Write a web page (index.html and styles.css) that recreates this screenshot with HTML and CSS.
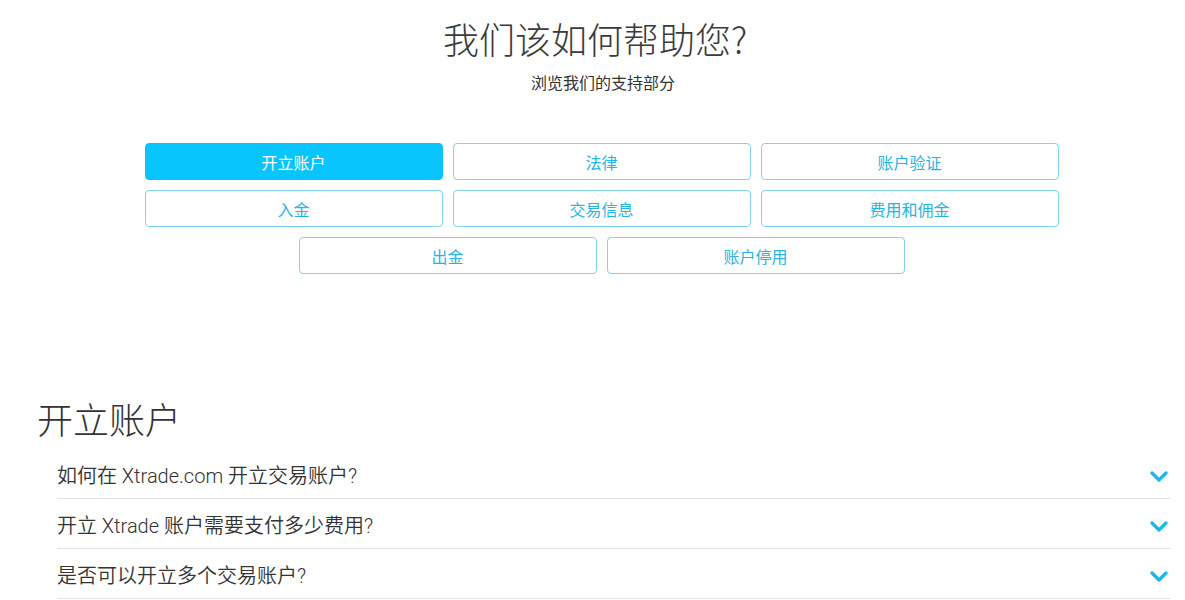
FILE: index.html
```html
<!DOCTYPE html>
<html lang="zh">
<head>
<meta charset="utf-8">
<title>帮助</title>
<link rel="stylesheet" href="styles.css">
</head>
<body>
<header class="hero">
  <h1 class="hero-title">我们该如何帮助您?</h1>
  <p class="hero-sub">浏览我们的支持部分</p>
</header>
<nav class="tabs">
  <div class="tab-row">
    <a class="tab active">开立账户</a>
    <a class="tab">法律</a>
    <a class="tab">账户验证</a>
  </div>
  <div class="tab-row">
    <a class="tab">入金</a>
    <a class="tab">交易信息</a>
    <a class="tab">费用和佣金</a>
  </div>
  <div class="tab-row">
    <a class="tab">出金</a>
    <a class="tab">账户停用</a>
  </div>
</nav>
<section class="faq">
  <h2 class="faq-title">开立账户</h2>
  <ul class="faq-list">
    <li class="faq-item"><span>如何在 Xtrade.com 开立交易账户?</span><svg class="chev" viewBox="0 0 18 12" width="18" height="12"><path d="M2 2 L9 9 L16 2" fill="none" stroke="#1cb6ea" stroke-width="3.2" stroke-linecap="round" stroke-linejoin="round"/></svg></li>
    <li class="faq-item"><span>开立 Xtrade 账户需要支付多少费用?</span><svg class="chev" viewBox="0 0 18 12" width="18" height="12"><path d="M2 2 L9 9 L16 2" fill="none" stroke="#1cb6ea" stroke-width="3.2" stroke-linecap="round" stroke-linejoin="round"/></svg></li>
    <li class="faq-item"><span>是否可以开立多个交易账户?</span><svg class="chev" viewBox="0 0 18 12" width="18" height="12"><path d="M2 2 L9 9 L16 2" fill="none" stroke="#1cb6ea" stroke-width="3.2" stroke-linecap="round" stroke-linejoin="round"/></svg></li>
  </ul>
</section>
</body>
</html>
```
FILE: styles.css
```css
* { box-sizing: border-box; }
body {
  margin: 0;
  background: #fff;
  color: #333;
  font-family: "Noto Sans CJK SC", "Roboto", "Liberation Sans", sans-serif;
}
.hero { text-align: center; padding-left: 5px; }
.hero-title {
  margin: 17px 0 0;
  font-size: 36px;
  line-height: 43px;
  font-weight: 300;
  color: #3a3a3a;
}
.hero-sub {
  margin: 10px 0 0;
  padding-left: 16px;
  font-size: 16px;
  line-height: 24px;
  color: #333;
}
.tabs {
  margin: 49px 0 0 144px;
  width: 915px;
  display: flex;
  flex-direction: column;
  gap: 10px;
}
.tab-row {
  display: flex;
  justify-content: center;
  gap: 10px;
}
.tab {
  width: 298px;
  height: 37px;
  display: flex;
  align-items: center;
  justify-content: center;
  border: 1px solid #7fd3ef;
  border-radius: 4px;
  color: #27b4e4;
  font-size: 16px;
  cursor: pointer;
}
.tab.active {
  background: #08c6fd;
  border-color: #08c6fd;
  color: #fff;
}
.faq { margin-top: 123px; }
.faq-title {
  margin: 0 0 10px 37px;
  font-size: 36px;
  line-height: 42px;
  font-weight: 300;
  color: #333;
}
.faq-list {
  list-style: none;
  margin: 0 0 0 57px;
  padding: 0;
  width: 1113px;
}
.faq-item {
  height: 50px;
  border-bottom: 1px solid #e3e3e3;
  display: flex;
  align-items: center;
  justify-content: space-between;
  font-family: "Roboto", "Noto Sans CJK SC", sans-serif;
  font-size: 20px;
  font-weight: 350;
  color: #333;
  padding-right: 2px;
  padding-top: 1px;
}
.chev { margin-top: 6px; }
```
